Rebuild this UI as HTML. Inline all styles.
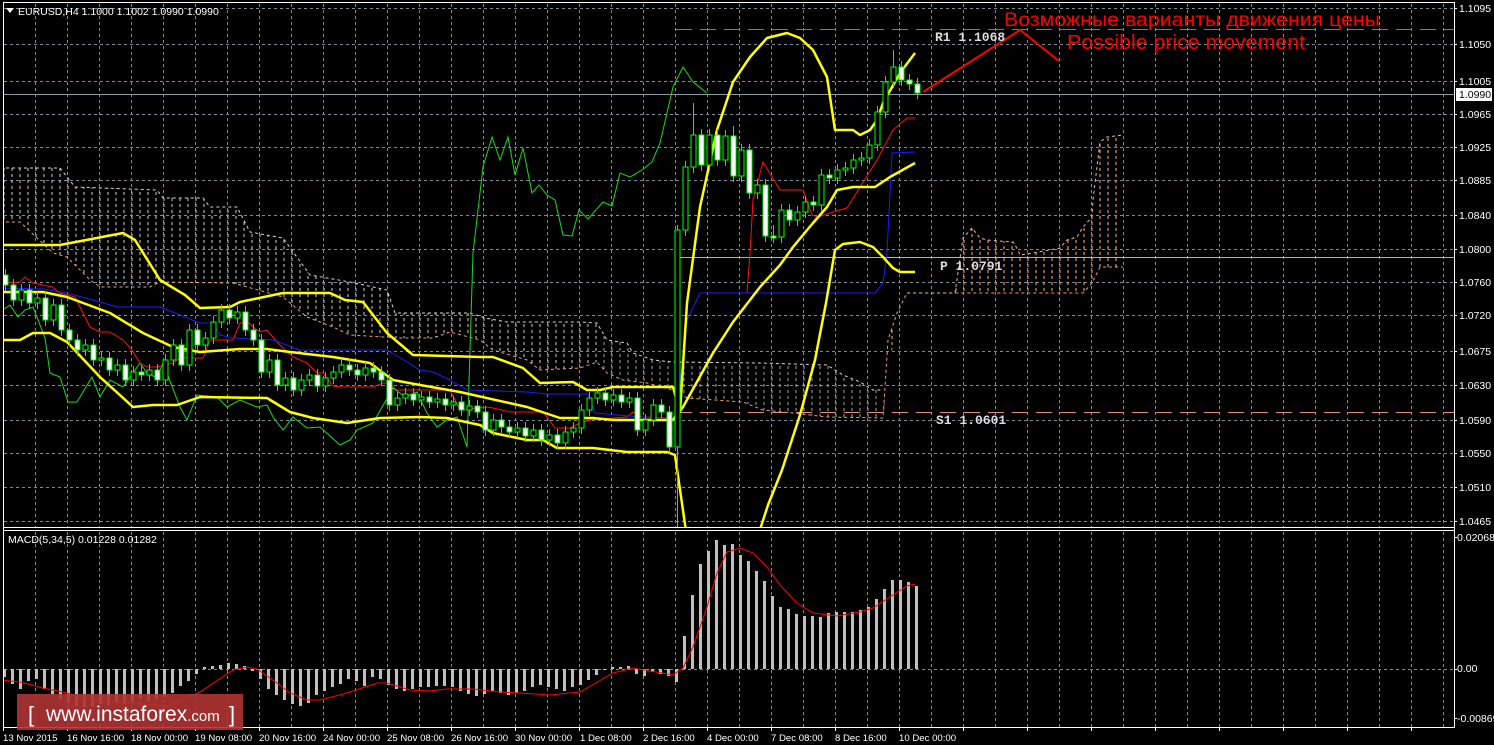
<!DOCTYPE html>
<html><head><meta charset="utf-8"><style>
html,body{margin:0;padding:0;background:#000;width:1494px;height:745px;overflow:hidden}
svg{display:block}
.t{font-family:"Liberation Sans","DejaVu Sans",sans-serif;font-size:10.5px;fill:#fff}
.x{font-size:9.6px}
.m{font-family:"Liberation Mono","DejaVu Sans Mono",monospace;font-size:13px;font-weight:bold;fill:#ddd}
.u{fill:#000;stroke:#00ff00;stroke-width:1}
.d{fill:#fff;stroke:#00ff00;stroke-width:1}
</style></head><body>
<svg width="1494" height="745" viewBox="0 0 1494 745" xmlns="http://www.w3.org/2000/svg">
<defs>
<clipPath id="main"><rect x="4" y="4" width="1450" height="523"/></clipPath>
<clipPath id="mac"><rect x="4" y="532" width="1450" height="195"/></clipPath>
<pattern id="hg" width="8" height="6" patternUnits="userSpaceOnUse"><line x1="4" y1="0" x2="4" y2="3" stroke="#cfcfcf" stroke-width="1"/></pattern>
<pattern id="ho" width="8" height="6" patternUnits="userSpaceOnUse"><line x1="4" y1="0" x2="4" y2="3" stroke="#f0b890" stroke-width="1"/></pattern>
<clipPath id="cl"><rect x="0" y="0" width="600" height="745"/></clipPath>
<clipPath id="cr"><rect x="600" y="0" width="900" height="745"/></clipPath>
</defs>
<rect width="1494" height="745" fill="#000"/>
<g stroke="#7d8c9c" stroke-width="1" stroke-dasharray="3,3">
<path d="M4 8.5H1454M4 44.5H1454M4 81.5H1454M4 114.5H1454M4 147.5H1454M4 180.5H1454M4 215.5H1454M4 249.5H1454M4 282.5H1454M4 315.5H1454M4 351.5H1454M4 385.5H1454M4 420.5H1454M4 453.5H1454M4 487.5H1454M4 521.5H1454M4 669.5H1454"/>
<path d="M35.5 4V527M67.5 4V527M99.5 4V527M131.5 4V527M163.5 4V527M195.5 4V527M227.5 4V527M259.5 4V527M291.5 4V527M323.5 4V527M355.5 4V527M387.5 4V527M419.5 4V527M451.5 4V527M483.5 4V527M515.5 4V527M547.5 4V527M579.5 4V527M611.5 4V527M643.5 4V527M675.5 4V527M707.5 4V527M739.5 4V527M771.5 4V527M803.5 4V527M835.5 4V527M867.5 4V527M899.5 4V527M931.5 4V527M963.5 4V527M995.5 4V527M1027.5 4V527M1059.5 4V527M1091.5 4V527M1123.5 4V527M1155.5 4V527M1187.5 4V527M1219.5 4V527M1251.5 4V527M1283.5 4V527M1315.5 4V527M1347.5 4V527M1379.5 4V527M1411.5 4V527M1443.5 4V527"/>
<path d="M35.5 532V727M67.5 532V727M99.5 532V727M131.5 532V727M163.5 532V727M195.5 532V727M227.5 532V727M259.5 532V727M291.5 532V727M323.5 532V727M355.5 532V727M387.5 532V727M419.5 532V727M451.5 532V727M483.5 532V727M515.5 532V727M547.5 532V727M579.5 532V727M611.5 532V727M643.5 532V727M675.5 532V727M707.5 532V727M739.5 532V727M771.5 532V727M803.5 532V727M835.5 532V727M867.5 532V727M899.5 532V727M931.5 532V727M963.5 532V727M995.5 532V727M1027.5 532V727M1059.5 532V727M1091.5 532V727M1123.5 532V727M1155.5 532V727M1187.5 532V727M1219.5 532V727M1251.5 532V727M1283.5 532V727M1315.5 532V727M1347.5 532V727M1379.5 532V727M1411.5 532V727M1443.5 532V727"/>
</g>
<g clip-path="url(#main)">
<g clip-path="url(#cl)">
<polygon fill="url(#hg)" points="0,168 60,168 75,187 157,190 163,198 203,198 210,207 237,207 250,232 283,238 310,275 350,282 387,290 395,313 470,313 485,318 507,322 580,322 597,323 607,340 627,343 633,353 653,360 673,362 760,363 827,365 843,375 860,382 873,390 883,390 883,418 827,417 793,413 763,410 743,402 687,398 673,390 647,383 623,380 607,373 597,362 580,368 540,370 527,360 493,350 480,340 460,332 450,332 433,338 400,338 350,335 333,327 307,317 283,297 233,283 160,282 150,287 100,287 90,280 67,257 53,253 20,222 0,222"/>
</g>
<g clip-path="url(#cr)">
<polygon fill="url(#hg)" opacity="0.8" points="0,168 60,168 75,187 157,190 163,198 203,198 210,207 237,207 250,232 283,238 310,275 350,282 387,290 395,313 470,313 485,318 507,322 580,322 597,323 607,340 627,343 633,353 653,360 673,362 760,363 827,365 843,375 860,382 873,390 883,390 883,418 827,417 793,413 763,410 743,402 687,398 673,390 647,383 623,380 607,373 597,362 580,368 540,370 527,360 493,350 480,340 460,332 450,332 433,338 400,338 350,335 333,327 307,317 283,297 233,283 160,282 150,287 100,287 90,280 67,257 53,253 20,222 0,222"/>
</g>
<polygon fill="url(#ho)" points="883,418 888,340 897,313 907,293 955,293 963,238 972,228 980,238 987,240 1013,242 1018,250 1020,255 1033,253 1060,248 1067,240 1077,237 1083,227 1092,217 1093,200 1100,142 1107,137 1123,135 1123,267 1100,267 1092,283 1083,293 907,293 897,313"/>
<g fill="none" stroke-dasharray="3,3" stroke-width="1">
<polyline stroke="#d8d8d8" points="0,168 60,168 75,187 157,190 163,198 203,198 210,207 237,207 250,232 283,238 310,275 350,282 387,290 395,313 470,313 485,318 507,322 580,322 597,323 607,340 627,343 633,353 653,360 673,362 760,363 827,365 843,375 860,382 873,390 883,390"/>
<polyline stroke="#f0a070" points="0,222 20,222 53,253 67,257 90,280 100,287 150,287 160,282 233,283 283,297 307,317 333,327 350,335 400,338 433,338 450,332 480,340 493,350 527,360 540,370 580,368 597,362 607,373 623,380 647,383 673,390 687,398 743,402 763,410 793,413 827,417 883,418 888,340 897,313 907,293 1083,293 1092,283 1100,267 1123,267"/>
<polyline stroke="#f0b890" points="907,293 955,293 963,238 972,228 980,238 987,240 1013,242 1018,250 1020,255 1033,253 1060,248 1067,240 1077,237 1083,227 1092,217 1093,200 1100,142 1107,137 1123,135"/>
</g>
<line x1="676" y1="29.5" x2="1454" y2="29.5" stroke="#e8561e" stroke-width="1" stroke-dasharray="16,8"/>
<line x1="676" y1="257.5" x2="1454" y2="257.5" stroke="#f5b800" stroke-width="1"/>
<line x1="676" y1="412.5" x2="1454" y2="412.5" stroke="#e09080" stroke-width="1" stroke-dasharray="16,8"/>
<line x1="4" y1="94.5" x2="1454" y2="94.5" stroke="#8c9aa8" stroke-width="1"/>
<polyline fill="none" stroke="#1ed81e" stroke-width="1" points="0,312 10,305 18,317 25,310 33,307 45,338 50,373 60,377 68,402 77,402 92,377 100,397 110,380 123,387 140,363 147,373 157,378 163,363 180,407 187,420 197,395 217,397 227,407 240,400 257,407 267,405 273,417 283,430 293,417 307,428 320,427 340,445 350,440 357,430 373,423 393,388 405,397 417,392 427,413 437,427 447,420 457,417 467,447 473,253 483,167 492,137 500,160 508,137 515,175 523,148 532,193 539,185 547,195 555,200 563,235 572,236 579,210 588,219 603,202 612,206 620,173 630,177 642,170 652,162 660,143 673,87 683,67 693,82 707,93"/>
<polyline fill="none" stroke="#ff1010" stroke-width="1" points="0,283 20,282 25,277 33,283 43,285 52,287 60,293 75,297 80,307 90,327 100,332 110,332 123,340 132,350 140,363 147,367 157,367 173,363 180,358 203,358 210,340 233,340 240,323 248,322 253,327 260,332 267,330 277,342 283,348 293,357 307,363 317,373 323,373 333,386 343,387 373,387 383,383 388,383 397,390 450,390 460,410 477,408 487,407 493,408 510,412 543,412 555,428 570,428 580,423 590,420 627,417 633,412 642,417 673,418 680,408"/>
<polyline fill="none" stroke="#ff1010" stroke-width="1" points="747,293 750,253 753,200 763,162 780,190 803,190 812,215 818,217 833,212 847,208 860,187 877,160 893,130 907,118 915,118"/>
<polyline fill="none" stroke="#1c1cff" stroke-width="1" points="0,288 43,289 67,293 100,302 117,307 160,307 180,315 200,323 213,323 220,335 233,338 273,340 300,350 387,350 407,362 420,370 433,372 450,380 467,390 527,392 547,394 588,394 595,413 640,417 675,418 677,413 687,320 700,293 875,293 883,283 887,253 892,153 915,152"/>
<g fill="none" stroke="#ffff00" stroke-width="2.5" stroke-linejoin="round">
<polyline points="3,245 43,245 60,245 123,233 135,240 160,280 185,295 200,308 230,307 240,302 283,293 330,293 345,300 363,302 387,333 413,355 480,357 493,357 523,368 540,383 573,382 587,390 600,390 613,387 673,387 680,412 687,303 700,207 717,130 733,82 750,57 767,38 787,33 800,38 813,50 827,77 835,130 853,130 860,135 870,130 877,120 883,103 900,73 915,53"/>
<polyline points="3,292 43,292 67,297 110,313 143,333 173,347 200,352 240,349 267,349 290,352 333,357 370,363 393,380 420,385 460,392 527,407 560,418 593,418 613,420 673,420 683,407 713,353 733,322 760,287 780,265 793,247 813,223 827,207 837,190 853,187 875,187 890,177 915,163"/>
<polyline points="3,340 20,340 33,333 50,333 67,342 100,377 133,407 153,405 177,405 200,397 267,398 290,412 313,418 347,423 380,418 420,417 447,418 480,425 493,433 527,440 543,440 557,448 593,448 627,452 667,452 675,455 688,545 755,545 768,505 782,470 800,415 815,360 826,303 835,250 843,244 860,242 873,247 883,257 893,268 900,272 915,272"/>
</g>
<path stroke="#00ff00" stroke-width="1" fill="none" d="M5.5 269V291M13.5 279V306M21.5 284V306M29.5 284V309M37.5 292V309M45.5 292V326M53.5 299V326M61.5 299V336M69.5 324V346M77.5 334V356M85.5 339V356M93.5 339V366M101.5 352V366M109.5 352V376M117.5 359V376M125.5 359V386M133.5 366V386M141.5 366V381M149.5 364V381M157.5 364V386M165.5 354V386M173.5 339V366M181.5 339V371M189.5 324V371M197.5 324V351M205.5 332V351M213.5 316V344M221.5 304V328M229.5 304V324M237.5 306V324M245.5 306V336M253.5 324V346M261.5 334V378M269.5 354V378M277.5 354V391M285.5 372V391M293.5 372V396M301.5 374V396M309.5 369V386M317.5 369V392M325.5 372V392M333.5 366V384M341.5 359V378M349.5 359V376M357.5 364V381M365.5 362V381M373.5 362V378M381.5 366V386M389.5 374V411M397.5 392V411M405.5 388V404M413.5 388V406M421.5 391V406M429.5 391V408M437.5 393V408M445.5 393V411M453.5 396V411M461.5 396V416M469.5 400V416M477.5 400V418M485.5 406V436M493.5 414V436M501.5 414V433M509.5 421V438M517.5 422V438M525.5 422V442M533.5 424V442M541.5 424V446M549.5 429V446M557.5 429V449M565.5 426V449M573.5 422V438M581.5 404V434M589.5 392V416M597.5 387V404M605.5 387V406M613.5 389V406M621.5 389V408M629.5 392V408M637.5 392V436M645.5 414V436M653.5 399V426M661.5 399V418M669.5 406V453M677.5 225V527M685.5 161V236M693.5 103V173M701.5 129V171M709.5 129V171M717.5 129V166M725.5 130V166M733.5 126V182M741.5 144V182M749.5 144V199M757.5 179V199M765.5 179V242M773.5 225V243M781.5 204V243M789.5 204V226M797.5 206V226M805.5 196V218M813.5 196V211M821.5 169V211M829.5 169V184M837.5 164V184M845.5 162V176M853.5 154V174M861.5 152V166M869.5 139V164M877.5 106V151M885.5 76V118M893.5 50V88M901.5 61V86M909.5 74V90M917.5 78V99"/>
<g>
<rect class="d" x="3" y="275" width="5" height="10"/><rect class="d" x="11" y="285" width="5" height="15"/><rect class="u" x="19" y="290" width="5" height="10"/><rect class="d" x="27" y="290" width="5" height="13"/><rect class="u" x="35" y="298" width="5" height="5"/><rect class="d" x="43" y="298" width="5" height="22"/><rect class="u" x="51" y="305" width="5" height="15"/><rect class="d" x="59" y="305" width="5" height="25"/><rect class="d" x="67" y="330" width="5" height="10"/><rect class="d" x="75" y="340" width="5" height="10"/><rect class="u" x="83" y="345" width="5" height="5"/><rect class="d" x="91" y="345" width="5" height="15"/><rect class="u" x="99" y="358" width="5" height="2"/><rect class="d" x="107" y="358" width="5" height="12"/><rect class="u" x="115" y="365" width="5" height="5"/><rect class="d" x="123" y="365" width="5" height="15"/><rect class="u" x="131" y="372" width="5" height="8"/><rect class="d" x="139" y="372" width="5" height="3"/><rect class="u" x="147" y="370" width="5" height="5"/><rect class="d" x="155" y="370" width="5" height="10"/><rect class="u" x="163" y="360" width="5" height="20"/><rect class="u" x="171" y="345" width="5" height="15"/><rect class="d" x="179" y="345" width="5" height="20"/><rect class="u" x="187" y="330" width="5" height="35"/><rect class="d" x="195" y="330" width="5" height="15"/><rect class="u" x="203" y="338" width="5" height="7"/><rect class="u" x="211" y="322" width="5" height="16"/><rect class="u" x="219" y="310" width="5" height="12"/><rect class="d" x="227" y="310" width="5" height="8"/><rect class="u" x="235" y="312" width="5" height="6"/><rect class="d" x="243" y="312" width="5" height="18"/><rect class="d" x="251" y="330" width="5" height="10"/><rect class="d" x="259" y="340" width="5" height="32"/><rect class="u" x="267" y="360" width="5" height="12"/><rect class="d" x="275" y="360" width="5" height="25"/><rect class="u" x="283" y="378" width="5" height="7"/><rect class="d" x="291" y="378" width="5" height="12"/><rect class="u" x="299" y="380" width="5" height="10"/><rect class="u" x="307" y="375" width="5" height="5"/><rect class="d" x="315" y="375" width="5" height="11"/><rect class="u" x="323" y="378" width="5" height="8"/><rect class="u" x="331" y="372" width="5" height="6"/><rect class="u" x="339" y="365" width="5" height="7"/><rect class="d" x="347" y="365" width="5" height="5"/><rect class="d" x="355" y="370" width="5" height="5"/><rect class="u" x="363" y="368" width="5" height="7"/><rect class="d" x="371" y="368" width="5" height="4"/><rect class="d" x="379" y="372" width="5" height="8"/><rect class="d" x="387" y="380" width="5" height="25"/><rect class="u" x="395" y="398" width="5" height="7"/><rect class="u" x="403" y="394" width="5" height="4"/><rect class="d" x="411" y="394" width="5" height="6"/><rect class="u" x="419" y="397" width="5" height="3"/><rect class="d" x="427" y="397" width="5" height="5"/><rect class="u" x="435" y="399" width="5" height="3"/><rect class="d" x="443" y="399" width="5" height="6"/><rect class="u" x="451" y="402" width="5" height="3"/><rect class="d" x="459" y="402" width="5" height="8"/><rect class="u" x="467" y="406" width="5" height="4"/><rect class="d" x="475" y="406" width="5" height="6"/><rect class="d" x="483" y="412" width="5" height="18"/><rect class="u" x="491" y="420" width="5" height="10"/><rect class="d" x="499" y="420" width="5" height="7"/><rect class="d" x="507" y="427" width="5" height="5"/><rect class="u" x="515" y="428" width="5" height="4"/><rect class="d" x="523" y="428" width="5" height="8"/><rect class="u" x="531" y="430" width="5" height="6"/><rect class="d" x="539" y="430" width="5" height="10"/><rect class="u" x="547" y="435" width="5" height="5"/><rect class="d" x="555" y="435" width="5" height="8"/><rect class="u" x="563" y="432" width="5" height="11"/><rect class="u" x="571" y="428" width="5" height="4"/><rect class="u" x="579" y="410" width="5" height="18"/><rect class="u" x="587" y="398" width="5" height="12"/><rect class="u" x="595" y="393" width="5" height="5"/><rect class="d" x="603" y="393" width="5" height="7"/><rect class="u" x="611" y="395" width="5" height="5"/><rect class="d" x="619" y="395" width="5" height="7"/><rect class="u" x="627" y="398" width="5" height="4"/><rect class="d" x="635" y="398" width="5" height="32"/><rect class="u" x="643" y="420" width="5" height="10"/><rect class="u" x="651" y="405" width="5" height="15"/><rect class="d" x="659" y="405" width="5" height="7"/><rect class="d" x="667" y="412" width="5" height="35"/><rect class="u" x="675" y="230" width="5" height="217"/><rect class="u" x="683" y="167" width="5" height="63"/><rect class="u" x="691" y="135" width="5" height="32"/><rect class="d" x="699" y="135" width="5" height="30"/><rect class="u" x="707" y="135" width="5" height="30"/><rect class="d" x="715" y="135" width="5" height="25"/><rect class="u" x="723" y="136" width="5" height="24"/><rect class="d" x="731" y="136" width="5" height="40"/><rect class="u" x="739" y="150" width="5" height="26"/><rect class="d" x="747" y="150" width="5" height="43"/><rect class="u" x="755" y="185" width="5" height="8"/><rect class="d" x="763" y="185" width="5" height="51"/><rect class="d" x="771" y="236" width="5" height="2"/><rect class="u" x="779" y="210" width="5" height="27"/><rect class="d" x="787" y="210" width="5" height="10"/><rect class="u" x="795" y="212" width="5" height="8"/><rect class="u" x="803" y="202" width="5" height="10"/><rect class="d" x="811" y="202" width="5" height="3"/><rect class="u" x="819" y="175" width="5" height="30"/><rect class="d" x="827" y="175" width="5" height="3"/><rect class="u" x="835" y="170" width="5" height="8"/><rect class="u" x="843" y="168" width="5" height="2"/><rect class="u" x="851" y="160" width="5" height="8"/><rect class="u" x="859" y="158" width="5" height="2"/><rect class="u" x="867" y="145" width="5" height="13"/><rect class="u" x="875" y="112" width="5" height="33"/><rect class="u" x="883" y="82" width="5" height="30"/><rect class="u" x="891" y="67" width="5" height="15"/><rect class="d" x="899" y="67" width="5" height="13"/><rect class="d" x="907" y="80" width="5" height="4"/><rect class="d" x="915" y="84" width="5" height="9"/>
</g>
</g>
<polyline fill="none" stroke="#ff0000" stroke-width="2" points="923,92 1020,30 1059,61"/>
<text x="1004" y="26" font-family="Liberation Sans, DejaVu Sans, sans-serif" font-size="19.5" fill="#ff0000" textLength="376" lengthAdjust="spacingAndGlyphs">Возможные варианты движения цены</text>
<text x="1067" y="49" font-family="Liberation Sans, DejaVu Sans, sans-serif" font-size="20" fill="#ff0000" textLength="238" lengthAdjust="spacingAndGlyphs">Possible price movement</text>
<text class="m" x="935" y="41">R1 1.1068</text>
<text class="m" x="940" y="270">P 1.0791</text>
<text class="m" x="936" y="424">S1 1.0601</text>
<g clip-path="url(#mac)">
<path stroke="#c0c0c0" stroke-width="3" fill="none" d="M4.5 669v8M12.5 669v15M20.5 669v20M28.5 669v12M36.5 669v10M44.5 669v20M52.5 669v25M60.5 669v30M68.5 669v34M76.5 669v37M84.5 669v38M92.5 669v37M100.5 669v35M108.5 669v36M116.5 669v34M124.5 669v35M132.5 669v33M140.5 669v30M148.5 669v32M156.5 669v30M164.5 669v28M172.5 669v24M180.5 669v17M188.5 669v12M196.5 669v5M204.5 669v-2M212.5 669v-3M220.5 669v-4M228.5 669v-6M236.5 669v-5M244.5 669v-3M252.5 669v2M260.5 669v10M268.5 669v20M276.5 669v26M284.5 669v31M292.5 669v35M300.5 669v37M308.5 669v34M316.5 669v26M324.5 669v22M332.5 669v18M340.5 669v15M348.5 669v10M356.5 669v12M364.5 669v17M372.5 669v8M380.5 669v10M388.5 669v16M396.5 669v20M404.5 669v22M412.5 669v20M420.5 669v18M428.5 669v18M436.5 669v17M444.5 669v17M452.5 669v18M460.5 669v22M468.5 669v25M476.5 669v27M484.5 669v25M492.5 669v22M500.5 669v24M508.5 669v26M516.5 669v24M524.5 669v22M532.5 669v18M540.5 669v16M548.5 669v18M556.5 669v20M564.5 669v22M572.5 669v18M580.5 669v16M588.5 669v11M596.5 669v6M604.5 669v1M612.5 669v-2M620.5 669v-2M628.5 669v-3M636.5 669v5M644.5 669v7M652.5 669v3M660.5 669v5M668.5 669v7M676.5 669v13M684.5 669v-33M692.5 669v-74M700.5 669v-105M708.5 669v-118M716.5 669v-129M724.5 669v-124M732.5 669v-125M740.5 669v-114M748.5 669v-108M756.5 669v-98M764.5 669v-88M772.5 669v-73M780.5 669v-62M788.5 669v-60M796.5 669v-55M804.5 669v-53M812.5 669v-53M820.5 669v-52M828.5 669v-56M836.5 669v-57M844.5 669v-57M852.5 669v-57M860.5 669v-59M868.5 669v-62M876.5 669v-70M884.5 669v-80M892.5 669v-89M900.5 669v-89M908.5 669v-87M916.5 669v-83"/>
<polyline fill="none" stroke="#ff0000" stroke-width="1" points="0,680 20,682 43,688 67,693 93,700 110,702 167,706 200,692 233,670 247,667 257,669 277,683 290,693 307,700 320,700 347,693 377,683 387,683 410,690 430,691 447,689 473,689 500,692 520,693 550,695 580,692 613,673 633,668 673,675 683,668 693,647 707,607 717,573 727,552 740,548 753,553 767,567 780,585 797,603 813,613 837,616 860,612 873,608 890,597 907,586 915,584"/>
</g>
<text class="t" x="8" y="543" font-size="10">MACD(5,34,5) 0.01228 0.01282</text>
<g stroke="#fff" stroke-width="1" fill="none">
<path d="M3.5 2.5H1454.5V727.5H3.5Z"/>
<path d="M3.5 527.5H1454.5M3.5 530.5H1454.5"/>
<path d="M1454 8.5h3M1454 44.5h3M1454 81.5h3M1454 114.5h3M1454 147.5h3M1454 180.5h3M1454 215.5h3M1454 249.5h3M1454 282.5h3M1454 315.5h3M1454 351.5h3M1454 385.5h3M1454 420.5h3M1454 453.5h3M1454 487.5h3M1454 521.5h3M1454 537.5h3M1454 669.5h3M1454 718.5h3"/>
<path d="M3.5 727v4M67.5 727v4M131.5 727v4M195.5 727v4M259.5 727v4M323.5 727v4M387.5 727v4M451.5 727v4M515.5 727v4M579.5 727v4M643.5 727v4M707.5 727v4M771.5 727v4M835.5 727v4M899.5 727v4M963.5 727v4M1027.5 727v4M1091.5 727v4M1155.5 727v4M1219.5 727v4M1283.5 727v4M1347.5 727v4M1411.5 727v4"/>
</g>
<path d="M6 8h8l-4 5z" fill="#fff"/>
<text class="t" x="18" y="15">EURUSD,H4  1.1000 1.1002 1.0990 1.0990</text>
<g class="t">
<text x="1459" y="12">1.1095</text><text x="1459" y="48">1.1050</text><text x="1459" y="85">1.1005</text><text x="1459" y="118">1.0965</text><text x="1459" y="151">1.0925</text><text x="1459" y="184">1.0885</text><text x="1459" y="219">1.0840</text><text x="1459" y="253">1.0800</text><text x="1459" y="286">1.0760</text><text x="1459" y="319">1.0720</text><text x="1459" y="355">1.0675</text><text x="1459" y="389">1.0630</text><text x="1459" y="424">1.0590</text><text x="1459" y="457">1.0550</text><text x="1459" y="491">1.0510</text><text x="1459" y="525">1.0465</text>
<text x="1457" y="541">0.02068</text><text x="1457" y="672">0.00</text><text x="1457" y="722">-0.00869</text>
</g>
<rect x="1456" y="88" width="36" height="13" fill="#fff"/>
<text class="t" x="1459" y="98" style="fill:#000">1.0990</text>
<g class="t x">
<text x="3" y="741">13 Nov 2015</text><text x="67" y="741">16 Nov 16:00</text><text x="131" y="741">18 Nov 00:00</text><text x="195" y="741">19 Nov 08:00</text><text x="259" y="741">20 Nov 16:00</text><text x="323" y="741">24 Nov 00:00</text><text x="387" y="741">25 Nov 08:00</text><text x="451" y="741">26 Nov 16:00</text><text x="515" y="741">30 Nov 00:00</text><text x="580" y="741">1 Dec 08:00</text><text x="643" y="741">2 Dec 16:00</text><text x="707" y="741">4 Dec 00:00</text><text x="771" y="741">7 Dec 08:00</text><text x="835" y="741">8 Dec 16:00</text><text x="899" y="741">10 Dec 00:00</text>
</g>
<rect x="17" y="694" width="226" height="36" fill="#b03434" opacity="0.9"/>
<text x="28" y="722" font-family="Liberation Sans, DejaVu Sans, sans-serif" font-size="22" fill="#fff">[</text>
<text x="46" y="721" font-family="Liberation Sans, DejaVu Sans, sans-serif" font-size="21" fill="#fff">www.instaforex<tspan font-size="15">.com</tspan></text>
<text x="229" y="722" font-family="Liberation Sans, DejaVu Sans, sans-serif" font-size="22" fill="#fff">]</text>
</svg>
</body></html>
